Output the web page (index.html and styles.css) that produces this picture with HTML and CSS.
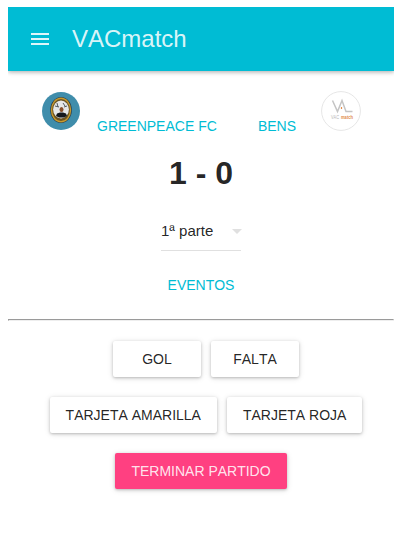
FILE: index.html
```html
<!DOCTYPE html>
<html lang="es">
<head>
<meta charset="utf-8">
<title>VACmatch</title>
<link rel="stylesheet" href="styles.css">
</head>
<body>
<header class="app-bar">
  <svg class="menu-icon" width="24" height="24" viewBox="0 0 24 24"><path d="M3 18h18v-2H3v2zm0-5h18v-2H3v2zm0-7v2h18V6H3z"/></svg>
  <h1 class="app-title">VACmatch</h1>
</header>
<main>
  <section class="teams">
    <svg class="crest" width="40" height="40" viewBox="0 0 40 40">
      <circle cx="20" cy="20" r="19" fill="#3f8dab"/>
      <ellipse cx="20" cy="19" rx="10.8" ry="13" fill="#25394a"/>
      <ellipse cx="20" cy="19" rx="9.500" ry="11.8" fill="#6b5421" stroke="#c79a2e" stroke-width="1.4"/>
      <ellipse cx="20" cy="18.500" rx="7.900" ry="9" fill="#e6e8e8"/>
      <path d="M14 15l4 1M16 12l1 4M22 12l2 3M23 16l3-1" fill="none" stroke="#555c60" stroke-width="1"/>
      <path d="M15 25l1-2.500 3-1h3l3 1 1 2.500-3 1.500h-5z" fill="#15191d"/>
      <ellipse cx="20.500" cy="18.500" rx="2" ry="2.500" fill="#87502b"/>
    </svg>
    <span class="team home">GREENPEACE FC</span>
    <span class="team away">BENS</span>
    <svg class="crest" width="40" height="40" viewBox="0 0 40 40">
      <circle cx="20" cy="20" r="19.4" fill="#fff" stroke="#e6e6e6"/>
      <path d="M11.5 9.5l5 11 4.500-11 4 11h6.500" fill="none" stroke="#c4c4c4" stroke-width="1.5"/>
      <path d="M20.500 16v2" stroke="#e28b4b" stroke-width="1.2"/>
      <text x="10" y="27.500" class="logo-text" textLength="8" lengthAdjust="spacingAndGlyphs">VAC</text>
      <text x="20" y="27.500" class="logo-text logo-accent" textLength="12" lengthAdjust="spacingAndGlyphs">match</text>
    </svg>
  </section>
  <div class="score">1 - 0</div>
  <div class="period">
    <span>1ª parte</span>
    <svg class="arrow" width="10" height="5" viewBox="0 0 10 5"><path d="M0 0l5 5 5-5z"/></svg>
  </div>
  <div class="events">EVENTOS</div>
  <hr>
  <div class="actions">
    <button class="btn">GOL</button>
    <button class="btn">FALTA</button>
  </div>
  <div class="actions">
    <button class="btn">TARJETA AMARILLA</button>
    <button class="btn">TARJETA ROJA</button>
  </div>
  <div class="finish"><button class="btn primary">TERMINAR PARTIDO</button></div>
</main>
</body>
</html>
```
FILE: styles.css
```css
* { box-sizing: border-box; }
body {
  margin: 7px 8px 0;
  width: 386px;
  background: #fff;
  color: rgba(0, 0, 0, 0.87);
  font-family: "Liberation Sans", Arial, sans-serif;
  font-kerning: none;
}
.app-bar {
  display: flex;
  align-items: center;
  height: 64px;
  padding: 0 20px;
  background: #00bcd4;
  box-shadow: 0 1px 6px rgba(0, 0, 0, 0.12), 0 1px 4px rgba(0, 0, 0, 0.24);
}
.menu-icon { fill: rgba(255, 255, 255, 0.87); }
.app-title {
  margin: 0 0 0 20px;
  color: rgba(255, 255, 255, 0.87);
  font-size: 24px;
  font-weight: 400;
  line-height: 64px;
}
.teams {
  display: flex;
  height: 60px;
  padding: 20px 33px 0;
}
.crest { flex: none; }
.team {
  padding-top: 27px;
  color: #00bcd4;
  font-size: 14px;
  line-height: 16px;
  white-space: nowrap;
}
.home { margin-left: 16px; }
.away { margin-left: auto; margin-right: 25px; }
.logo-text { fill: #b8b8b8; font-size: 5.5px; }
.logo-accent { fill: #e28b4b; font-weight: 700; }
.score {
  margin-top: 24px;
  font-size: 32px;
  font-weight: 700;
  line-height: 37px;
  text-align: center;
}
.period {
  display: flex;
  align-items: center;
  justify-content: space-between;
  width: 80px;
  height: 39px;
  margin: 20px auto 0;
  border-bottom: 1px solid #e0e0e0;
  font-size: 15px;
}
.period span { padding-bottom: 2px; white-space: nowrap; }
.arrow { flex: none; margin-right: -1px; fill: #e0e0e0; }
.events {
  margin-top: 26px;
  color: #00bcd4;
  font-size: 14px;
  line-height: 16px;
  text-align: center;
}
hr {
  margin: 26px 0 20px;
  border: 1px solid;
  border-color: #9a9a9a #eee #eee #9a9a9a;
}
.actions {
  display: flex;
  justify-content: center;
  gap: 10px;
  margin-bottom: 20px;
  padding-left: 10px;
}
.finish {
  display: flex;
  justify-content: center;
  padding-bottom: 10px;
}
.btn {
  min-width: 88px;
  height: 36px;
  padding: 0 16px;
  border: 0;
  border-radius: 2px;
  background: #fff;
  box-shadow: 0 1px 6px rgba(0, 0, 0, 0.12), 0 1px 3px rgba(0, 0, 0, 0.22);
  color: rgba(0, 0, 0, 0.87);
  font: 14px "Liberation Sans", Arial, sans-serif;
  font-kerning: none;
}
.primary { background: #ff4081; color: rgba(255, 255, 255, 0.87); }
```
